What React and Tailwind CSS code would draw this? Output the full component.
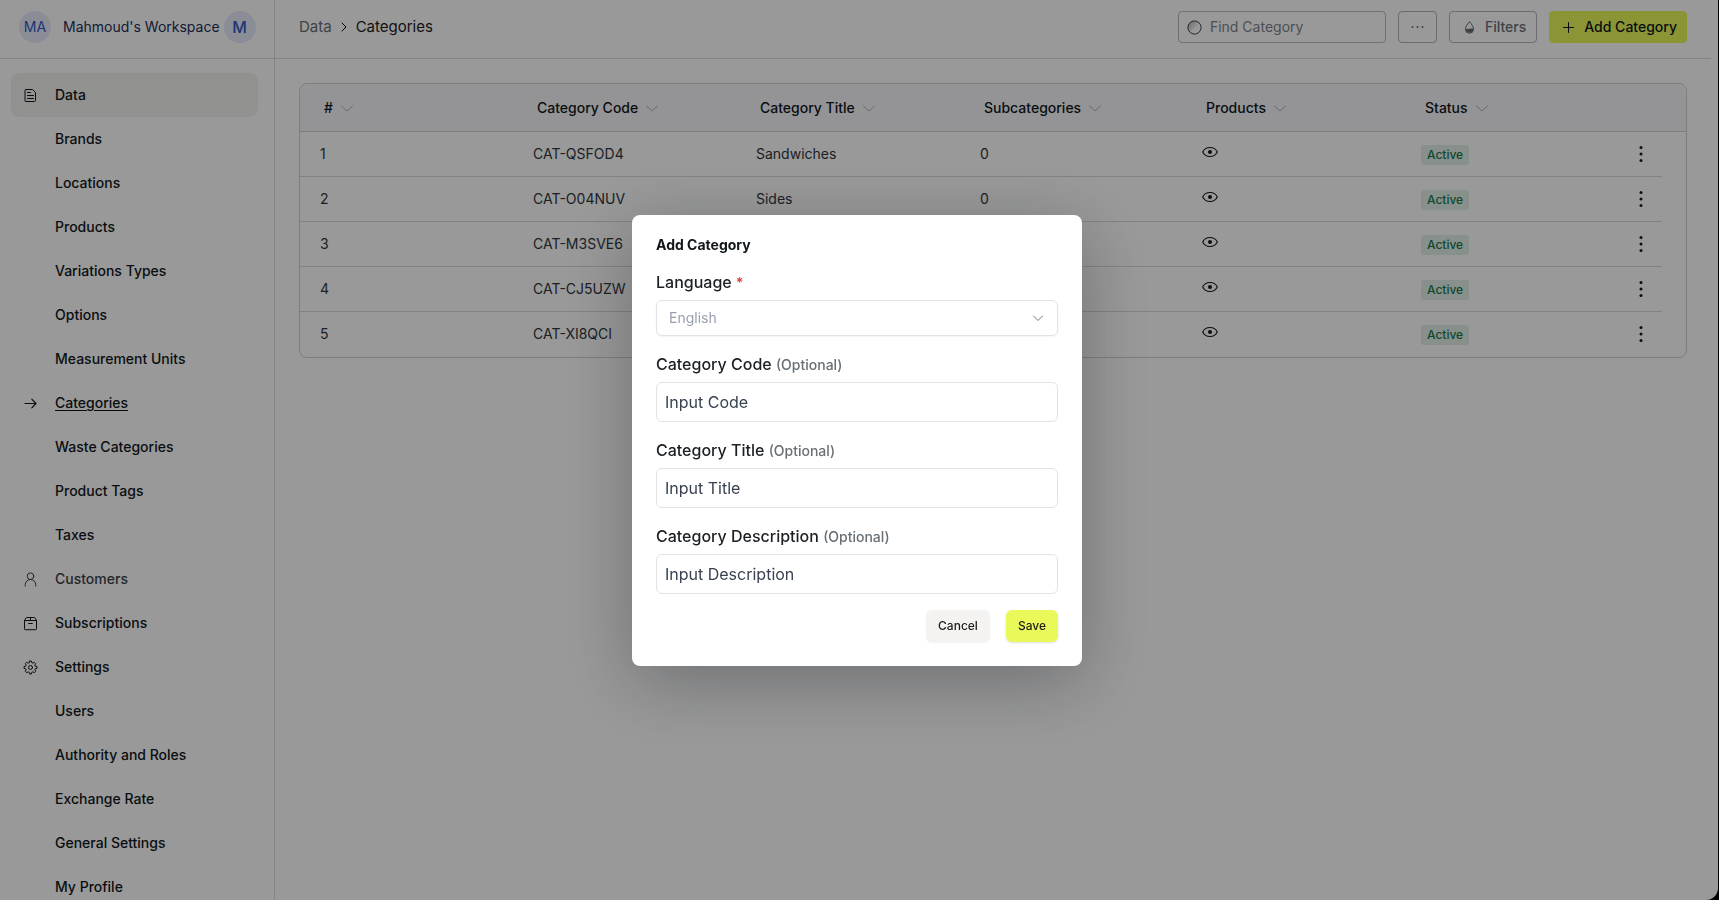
import { useState } from "react";

const navItems = [
  { label: "Data", icon: "file", active: true },
  { label: "Brands" },
  { label: "Locations" },
  { label: "Products" },
  { label: "Variations Types" },
  { label: "Options" },
  { label: "Measurement Units" },
  { label: "Categories", icon: "arrow", current: true },
  { label: "Waste Categories" },
  { label: "Product Tags" },
  { label: "Taxes" },
  { label: "Customers", icon: "user", muted: true },
  { label: "Subscriptions", icon: "box" },
  { label: "Settings", icon: "gear" },
  { label: "Users" },
  { label: "Authority and Roles" },
  { label: "Exchange Rate" },
  { label: "General Settings" },
  { label: "My Profile" },
];

const columns = [
  { label: "#", width: "w-[213px]" },
  { label: "Category Code", width: "w-[223px]" },
  { label: "Category Title", width: "w-[224px]" },
  { label: "Subcategories", width: "w-[222px]" },
  { label: "Products", width: "w-[219px]" },
  { label: "Status", width: "w-[219px]" },
];

const categories = [
  { code: "CAT-QSFOD4", title: "Sandwiches", subcategories: 0 },
  { code: "CAT-O04NUV", title: "Sides", subcategories: 0 },
  { code: "CAT-M3SVE6", title: "Beverages", subcategories: 0 },
  { code: "CAT-CJ5UZW", title: "Desserts", subcategories: 0 },
  { code: "CAT-XI8QCI", title: "Salads", subcategories: 0 },
];

const Svg = ({ className, children, viewBox = "0 0 15 15" }) => (
  <svg
    className={className}
    viewBox={viewBox}
    fill="none"
    stroke="currentColor"
    strokeLinecap="round"
    strokeLinejoin="round"
    aria-hidden="true"
  >
    {children}
  </svg>
);

const NavIcon = ({ name }) => {
  if (name === "file") {
    return (
      <Svg className="size-[15px]">
        <path d="M3 1.5h6.500l3 3v8a1 1 0 0 1-1 1H3a1 1 0 0 1-1-1v-10a1 1 0 0 1 1-1Z" />
        <path d="M4.500 4.500h3M4.500 7.500h6M4.500 10.500h6" />
      </Svg>
    );
  }
  if (name === "arrow") {
    return (
      <Svg className="size-[15px]">
        <path d="M2 7.500h11M8.800 3.200l4.200 4.300-4.200 4.300" strokeWidth="1.200" />
      </Svg>
    );
  }
  if (name === "user") {
    return (
      <Svg className="size-[15px]">
        <circle cx="7.5" cy="4.2" r="3.3" />
        <path d="M2.2 14v-1.2a5.3 5.3 0 0 1 10.6 0V14" />
      </Svg>
    );
  }
  if (name === "box") {
    return (
      <Svg className="size-[15px]">
        <path d="M1.5 4.5h12v8.4a.8.8 0 0 1-.8.8H2.3a.8.8 0 0 1-.8-.8V4.5l1.6-2.7a.8.8 0 0 1 .6-.3h7.6a.8.8 0 0 1 .6.3l1.6 2.7M7.5 1.5v3M5.7 7.5h3.6" />
      </Svg>
    );
  }
  return (
    <Svg className="size-[15px]">
      <circle cx="7.5" cy="7.5" r="2" />
      <path d="M6.6 1h1.8l.4 1.7 1.1.5 1.5-.9 1.3 1.3-.9 1.5.5 1.1 1.7.4v1.8l-1.7.4-.5 1.1.9 1.5-1.3 1.3-1.5-.9-1.1.5-.4 1.7H6.6l-.4-1.7-1.1-.5-1.5.9-1.3-1.3.9-1.5-.5-1.1L1 8.4V6.6l1.7-.4.5-1.1-.9-1.5 1.3-1.3 1.5.9 1.1-.5Z" />
    </Svg>
  );
};

const Sidebar = () => (
  <aside className="w-[275px] shrink-0 overflow-hidden border-r border-[#dcdce0]">
    <div className="flex h-[59px] items-center border-b border-[#dcdce0] pb-1 pl-[19px]">
      <span className="flex size-8 items-center justify-center rounded-full bg-[#e6ebfa] text-sm text-[#3358c4]">
        MA
      </span>
      <span className="ml-3 whitespace-nowrap text-sm text-[#1c3057]">Mahmoud's Workspace</span>
      <span className="ml-1 flex size-8 items-center justify-center rounded-full bg-[#e6ebfa] text-base font-medium text-[#3358c4]">
        M
      </span>
    </div>
    <nav className="pt-3.5 pr-4 pl-[11px]">
      {navItems.map((item) => (
        <a
          key={item.label}
          href="#"
          className={`flex h-11 items-center rounded-lg pl-3 text-sm font-medium ${
            item.active ? "bg-[#f2f2ee]" : ""
          } ${item.muted ? "text-[#3a4147]" : "text-[#11181c]"}`}
        >
          <span className="w-8 shrink-0">{item.icon && <NavIcon name={item.icon} />}</span>
          <span className={item.current ? "underline underline-offset-2" : ""}>{item.label}</span>
        </a>
      ))}
    </nav>
  </aside>
);

const TopBar = ({ onAdd }) => {
  const [search, setSearch] = useState("");

  return (
    <header className="flex h-[59px] items-center justify-between border-b border-[#dcdce0] px-6 pb-1">
      <div className="flex items-center gap-1.5 text-[15px]">
        <a href="#" className="text-[#687076]">
          Data
        </a>
        <Svg className="size-3" viewBox="0 0 12 12">
          <path d="M4 2 8 6 4 10" />
        </Svg>
        <span className="text-[#1c2024]">Categories</span>
      </div>

      <div className="flex items-center gap-3">
        <label className="flex h-8 w-52 items-center gap-2 rounded border border-[#bdbdc4] px-2">
          <svg className="size-[15px] shrink-0" viewBox="0 0 15 15" fill="none" aria-hidden="true">
            <defs>
              <linearGradient id="lens" x1="0" y1="0" x2="1" y2="1">
                <stop offset="0" stopColor="#687076" stopOpacity="0.6" />
                <stop offset="0.6" stopColor="#687076" stopOpacity="0" />
              </linearGradient>
            </defs>
            <circle cx="7.5" cy="7.5" r="6.6" fill="url(#lens)" stroke="#3f464c" />
          </svg>
          <input
            aria-label="Find Category"
            placeholder="Find Category"
            value={search}
            onChange={(e) => setSearch(e.target.value)}
            className="w-full min-w-0 bg-transparent text-sm outline-none placeholder:text-[#80868c]"
          />
        </label>
        <button
          type="button"
          aria-label="More"
          className="flex h-8 w-[39px] items-center justify-center rounded border border-[#b4b4bb] text-[#687076]"
        >
          <svg className="size-[15px]" viewBox="0 0 15 15" fill="currentColor" aria-hidden="true">
            <circle cx="2.5" cy="7" r="1" />
            <circle cx="7.5" cy="7" r="1" />
            <circle cx="12.5" cy="7" r="1" />
          </svg>
        </button>
        <button
          type="button"
          className="flex h-8 items-center gap-2 rounded border border-[#b4b4bb] pr-2.5 pl-3 text-sm font-medium text-[#687076]"
        >
          <svg className="size-[15px]" viewBox="0 0 15 15" fill="none" aria-hidden="true">
            <path
              d="M7.500 1.500C6 3.700 3.500 6.200 3.500 9.200a4 4 0 0 0 8 0C11.500 6.200 9 3.700 7.500 1.500Z"
              stroke="currentColor"
            />
            <path d="M3.500 8.800c2 1 4-.800 8-.300a4 4 0 1 1-8 .300Z" fill="currentColor" />
          </svg>
          Filters
        </button>
        <button
          type="button"
          onClick={onAdd}
          className="flex h-8 items-center gap-2 rounded bg-[#e9f95a] pr-2.5 pl-3 text-sm font-medium text-[#11181c]"
        >
          <Svg className="size-[15px]">
            <path d="M7.5 2.5v10M2.5 7.5h10" />
          </Svg>
          Add Category
        </button>
      </div>
    </header>
  );
};

const CategoryTable = () => (
  <div className="overflow-hidden rounded-lg border border-[#d2d2d8]">
    <table className="w-full table-fixed border-separate border-spacing-0 text-left text-sm">
      <thead className="bg-[#f7f7fb]">
        <tr>
          {columns.map((col) => (
            <th
              key={col.label}
              className={`h-12 border-b border-[#d2d2d8] pl-6 font-medium text-[#11181c] ${col.width}`}
            >
              <span className="flex items-center gap-2">
                {col.label}
                <Svg className="size-3 text-[#b0b0b8]" viewBox="0 0 12 12">
                  <path d="M.5 4 6 9l5.500-5" />
                </Svg>
              </span>
            </th>
          ))}
          <th className="w-[42px] border-b border-[#d2d2d8]" />
          <th className="w-6 border-b border-[#d2d2d8]" />
        </tr>
      </thead>
      <tbody className="text-[#30363b] [&>tr>td]:border-b [&>tr>td]:border-[#d9d9dd] [&>tr>td:last-child]:border-transparent [&>tr:last-child>td]:border-transparent">
        {categories.map((cat, i) => (
          <tr key={cat.code}>
            <td className="h-[45px] pl-5">{i + 1}</td>
            <td className="pl-5">{cat.code}</td>
            <td className="pl-5">{cat.title}</td>
            <td className="pl-5">{cat.subcategories}</td>
            <td className="pl-5">
              <button type="button" aria-label="View products" className="mb-1 block text-[#11181c]">
                <svg className="size-4" viewBox="0 0 16 16" fill="none" aria-hidden="true">
                  <path
                    d="M.7 8C2 5.2 4.7 3.5 8 3.5S14 5.2 15.3 8C14 10.8 11.3 12.5 8 12.5S2 10.8.7 8Z"
                    stroke="currentColor"
                    strokeWidth="1.1"
                  />
                  <circle cx="8" cy="8" r="2" fill="currentColor" />
                </svg>
              </button>
            </td>
            <td className="pl-5">
              <span className="mt-0.5 flex h-5 w-fit items-center rounded-[3px] bg-[#e3f1e9] px-1.5 text-xs font-medium text-[#18794e]">
                Active
              </span>
            </td>
            <td>
              <button type="button" aria-label="Row actions" className="mx-auto block text-[#11181c]">
                <svg className="size-5" viewBox="0 0 20 20" fill="currentColor" aria-hidden="true">
                  <circle cx="10" cy="3.4" r="1.5" />
                  <circle cx="10" cy="10" r="1.5" />
                  <circle cx="10" cy="16.6" r="1.5" />
                </svg>
              </button>
            </td>
            <td />
          </tr>
        ))}
      </tbody>
    </table>
  </div>
);

const TextField = ({ id, label, placeholder, value, onChange }) => (
  <div className="mt-4">
    <label htmlFor={id} className="block h-6 text-base font-medium text-[#1c2024]">
      {label} <span className="text-sm text-[#687076]">(Optional)</span>
    </label>
    <input
      id={id}
      name={id}
      placeholder={placeholder}
      value={value}
      onChange={onChange}
      className="mt-1.5 h-10 w-full rounded-md border border-[#e2e2e4] px-2 text-base outline-none placeholder:text-[#384250]"
    />
  </div>
);

const AddCategoryDialog = ({ onClose }) => {
  const [formData, setFormData] = useState({ code: "", title: "", description: "" });

  const handleChange = (e) => {
    setFormData({ ...formData, [e.target.name]: e.target.value });
  };

  const handleSubmit = (e) => {
    e.preventDefault();
    onClose();
  };

  return (
    <div className="fixed inset-0 flex items-center justify-center bg-black/40 pr-[5px] pb-[19px]">
      <form
        role="dialog"
        aria-labelledby="dialog-title"
        onSubmit={handleSubmit}
        className="w-full max-w-[450px] rounded-lg bg-white p-6 shadow-[0_16px_70px_rgba(14,18,22,0.3)]"
      >
        <h2 id="dialog-title" className="h-3 text-sm leading-3 font-bold text-[#11181c]">
          Add Category
        </h2>

        {/* Language is fixed for now */}
        <div className="mt-[19px]">
          <label htmlFor="language" className="block h-6 text-base font-medium text-[#1c2024]">
            Language <span className="text-sm text-[#e5352b]">*</span>
          </label>
          <div className="relative mt-1.5">
            <select
              id="language"
              disabled
              className="h-9 w-full appearance-none rounded-md border border-[#e2e2e4] px-3 text-sm text-[#98a0ae] opacity-100 shadow-xs"
            >
              <option>English</option>
            </select>
            <Svg
              className="pointer-events-none absolute top-3 right-3.5 size-3 text-[#70757d]"
              viewBox="0 0 12 12"
            >
              <path d="M1.5 4 6 8.500 10.500 4" />
            </Svg>
          </div>
        </div>

        <TextField
          id="code"
          label="Category Code"
          placeholder="Input Code"
          value={formData.code}
          onChange={handleChange}
        />
        <TextField
          id="title"
          label="Category Title"
          placeholder="Input Title"
          value={formData.title}
          onChange={handleChange}
        />
        <TextField
          id="description"
          label="Category Description"
          placeholder="Input Description"
          value={formData.description}
          onChange={handleChange}
        />

        <div className="mt-4 flex justify-end gap-4">
          <button
            type="button"
            onClick={onClose}
            className="h-8 rounded-md bg-[#f4f3f2] px-3 text-xs font-medium text-[#1c1917] shadow-xs"
          >
            Cancel
          </button>
          <button
            type="submit"
            className="h-8 rounded-md bg-[#e9f95a] px-3 text-xs font-medium text-[#1c1917] shadow-sm"
          >
            Save
          </button>
        </div>
      </form>
    </div>
  );
};

const App = () => {
  const [dialogOpen, setDialogOpen] = useState(true);

  return (
    <div className="h-screen overflow-hidden bg-black pr-px font-[Inter,sans-serif]">
      <div className="flex h-full overflow-hidden rounded-br-xl bg-white pr-[7px]">
        <Sidebar />
        <div className="min-w-0 flex-1">
          <TopBar onAdd={() => setDialogOpen(true)} />
          <main className="p-6">
            <CategoryTable />
          </main>
        </div>
      </div>
      {dialogOpen && <AddCategoryDialog onClose={() => setDialogOpen(false)} />}
    </div>
  );
};

export default App;
